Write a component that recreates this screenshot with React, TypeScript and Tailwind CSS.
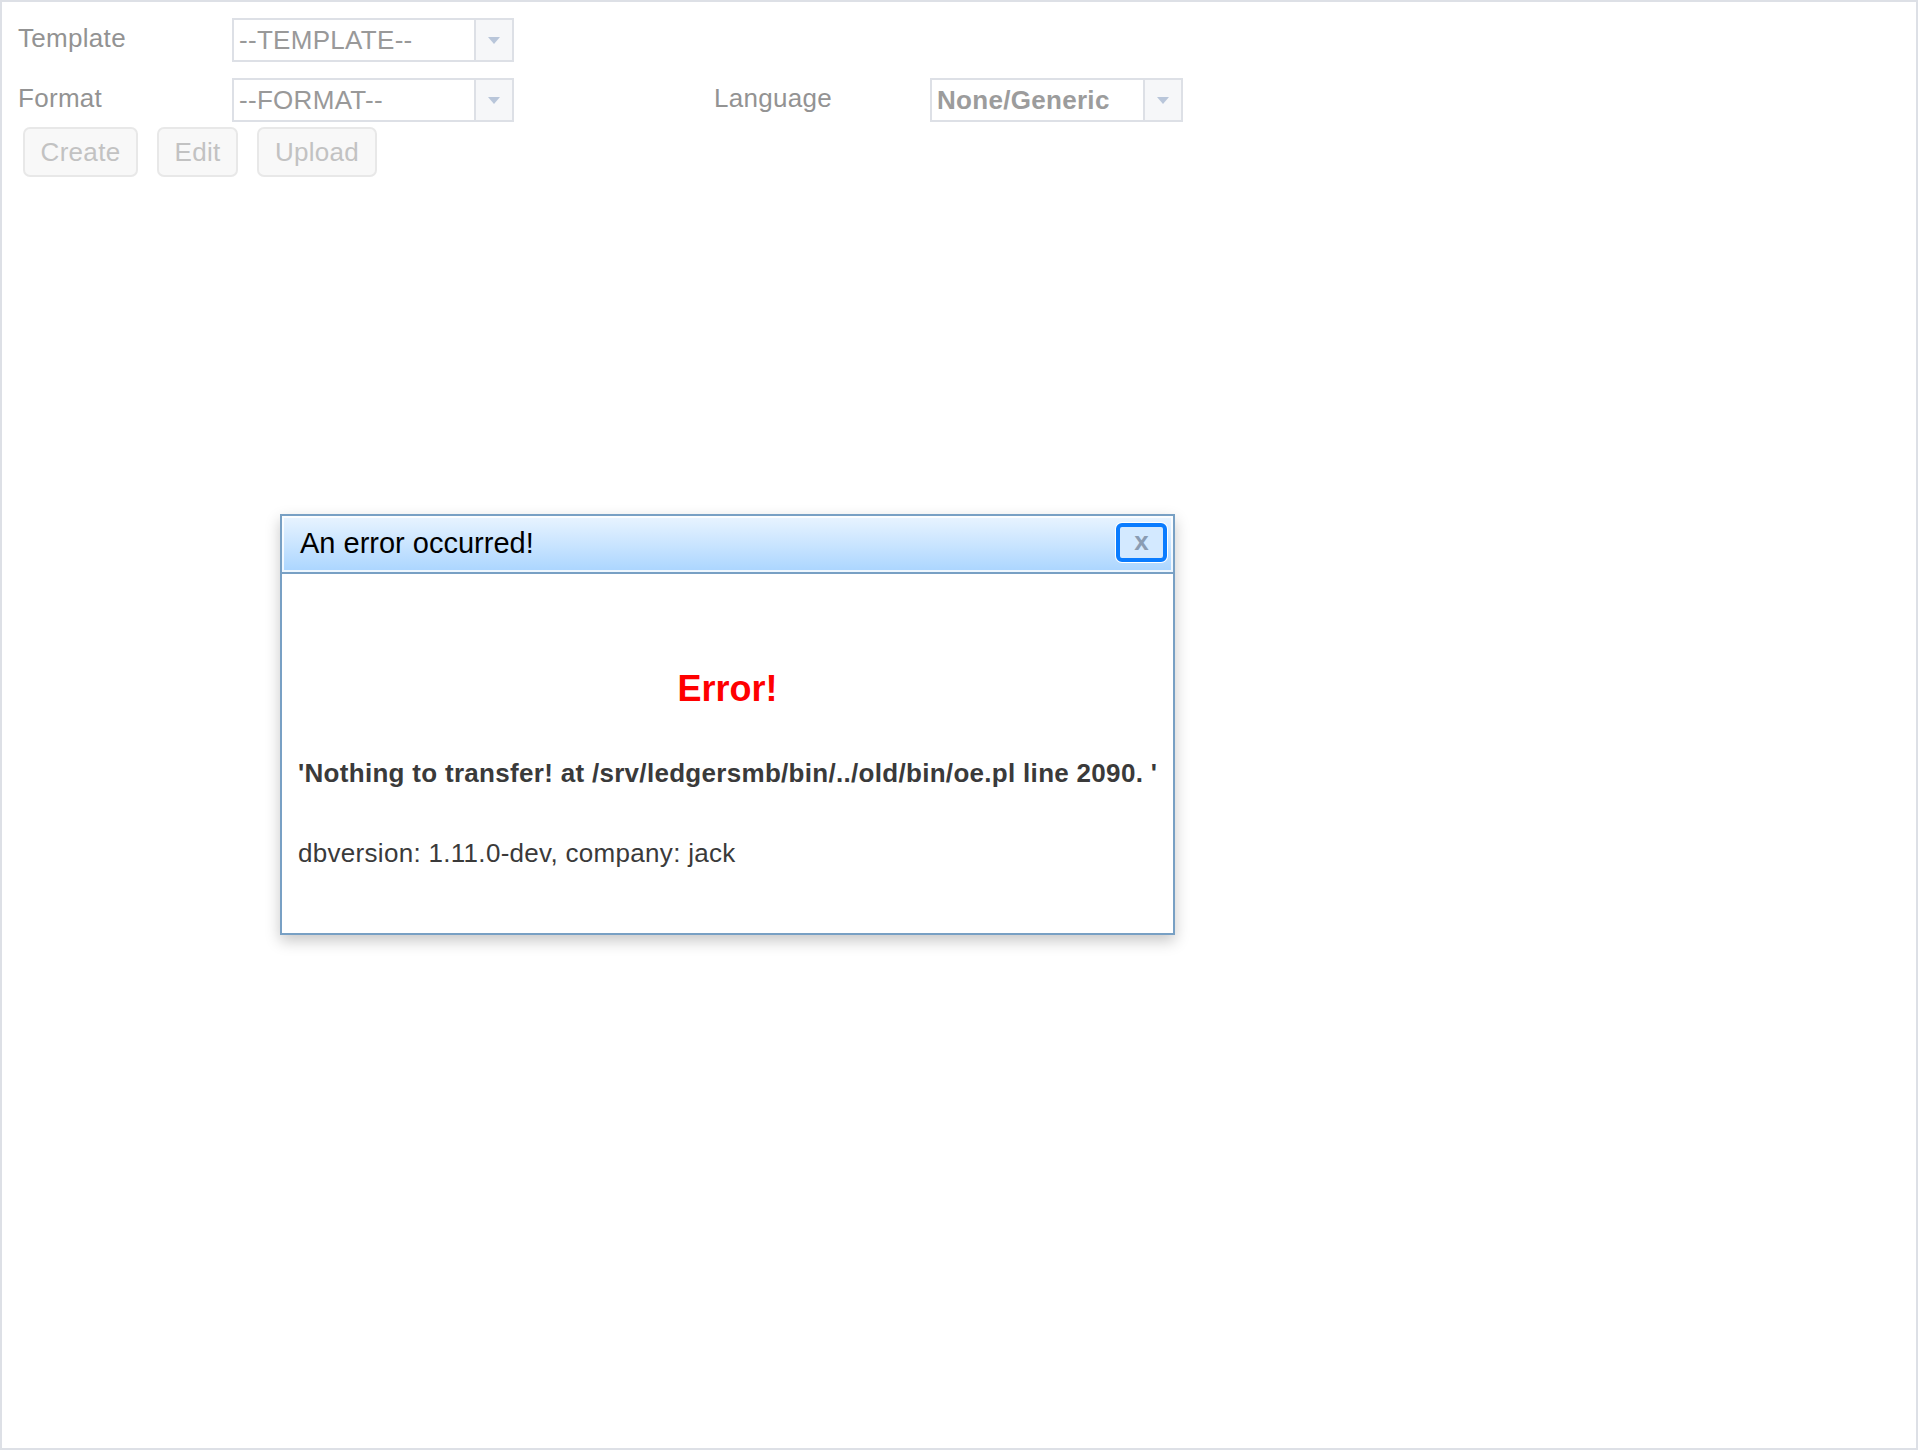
import React from "react";

const Arrow = () => (
  <div className="flex h-full w-[38px] shrink-0 items-center justify-center border-l-2 border-[#dde0e6] bg-[#f6f7f9]">
    <svg width="12" height="7" viewBox="0 0 12 7">
      <polygon points="0,0 12,0 6,7" fill="#b9c6da" />
    </svg>
  </div>
);

const Select = ({ value, width, bold }: { value: string; width: string; bold?: boolean }) => (
  <div className={`flex h-[44px] ${width} items-center border-2 border-[#dde0e6] bg-white`}>
    <span
      className={`flex-1 whitespace-nowrap pl-[5px] text-[26px] leading-[30px] tracking-[0.3px] ${
        bold ? "font-bold text-[#9c9c9c]" : "text-[#999999]"
      }`}
    >
      {value}
    </span>
    <Arrow />
  </div>
);

const Btn = ({ label, width }: { label: string; width: string }) => (
  <button
    className={`flex h-[50px] ${width} items-center justify-center rounded-[7px] border-2 border-[#e8e8e8] bg-[#f8f8f8] text-[26px] tracking-[0.3px] text-[#c2c2c2]`}
  >
    {label}
  </button>
);

export default function App() {
  return (
    <div
      className="relative h-[1450px] w-full border-2 border-[#dde0e6] bg-white"
      style={{ fontFamily: '"Liberation Sans", Arial, Helvetica, sans-serif' }}
    >
      <div className="flex flex-col pl-[16px] pt-[16px]">
        <div className="flex items-center">
          <span className="w-[214px] pb-1 text-[26px] tracking-[0.3px] text-[#939393]">Template</span>
          <Select value="--TEMPLATE--" width="w-[282px]" />
        </div>
        <div className="mt-[16px] flex items-center">
          <span className="w-[214px] pb-1 text-[26px] tracking-[0.3px] text-[#939393]">Format</span>
          <Select value="--FORMAT--" width="w-[282px]" />
          <span className="ml-[200px] w-[216px] pb-1 text-[26px] tracking-[0.3px] text-[#939393]">Language</span>
          <Select value="None/Generic" width="w-[253px]" bold />
        </div>
        <div className="ml-[5px] mt-[5px] flex gap-[19px]">
          <Btn label="Create" width="w-[115px]" />
          <Btn label="Edit" width="w-[81px]" />
          <Btn label="Upload" width="w-[120px]" />
        </div>
      </div>

      <div className="absolute left-[278px] top-[512px] flex h-[421px] w-[895px] flex-col border-2 border-[#78a0c4] bg-white shadow-[0_6px_14px_rgba(0,0,0,0.22)]">
        <div className="flex h-[58px] items-start justify-between border-b-2 border-[#78a0c4] bg-gradient-to-b from-[#e9f4ff] to-[#aad5ff] pl-[18px] pr-[6px] shadow-[inset_0_0_0_2px_rgba(255,255,255,0.8)]">
          <span className="mt-[11px] text-[29px] leading-[32px] text-black">An error occurred!</span>
          <div className="mt-[7px] flex h-[39px] w-[51px] items-center justify-center rounded-[6px] border-[4px] border-[#0a7cff] bg-[#d3e9ff] ring-1 ring-white">
            <span className="pb-[3px] text-[26px] font-bold leading-none text-[#8a9cb3]">x</span>
          </div>
        </div>
        <div className="flex flex-1 flex-col px-[16px] pt-[94px] text-[#3a3a3a]">
          <div className="h-[42px] text-center text-[36px] font-bold leading-[42px] text-[#ff0000]">Error!</div>
          <div className="mt-[48px] h-[30px] whitespace-nowrap text-[26px] font-bold leading-[30px] tracking-[0.3px]">
            'Nothing to transfer! at /srv/ledgersmb/bin/../old/bin/oe.pl line 2090. '
          </div>
          <div className="mt-[50px] h-[30px] text-[26px] leading-[30px] tracking-[0.3px]">
            dbversion: 1.11.0-dev, company: jack
          </div>
        </div>
      </div>
    </div>
  );
}
